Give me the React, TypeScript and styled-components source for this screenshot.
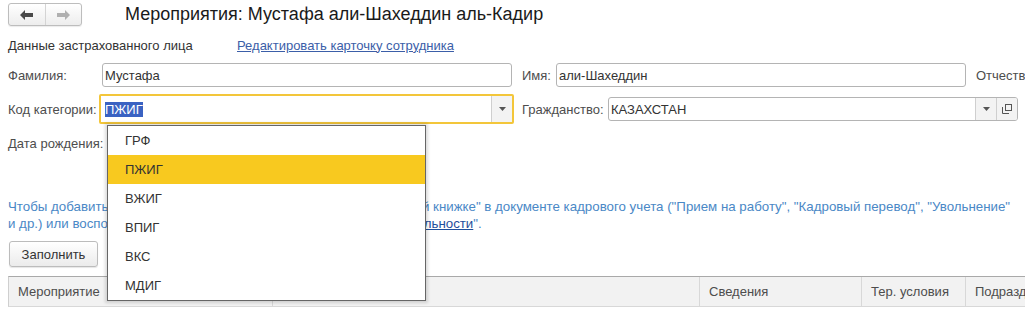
import React from 'react';
import styled, { createGlobalStyle } from 'styled-components';

const Global = createGlobalStyle`
  html, body { margin: 0; padding: 0; background: #fff; }
  body {
    font-family: "Liberation Sans", Arial, sans-serif;
    font-size: 13px;
    color: #4d4d4d;
  }
  * { box-sizing: border-box; }
`;

const Page = styled.div`
  position: relative;
  width: 1025px;
  height: 309px;
  overflow: hidden;
  display: flex;
  flex-direction: column;
`;

const Header = styled.div`
  display: flex;
  align-items: flex-start;
  height: 34px;
  padding: 3px 0 0 8px;
`;

const NavGroup = styled.div`
  display: flex;
  width: 74px;
  height: 23px;
  border: 1px solid #bdbdbd;
  border-radius: 3px;
  background: linear-gradient(#ffffff, #ededed);
  box-shadow: 0 1px 1px rgba(0, 0, 0, 0.08);
`;

const NavButton = styled.div`
  flex: 1;
  display: flex;
  align-items: center;
  justify-content: center;
  & + & {
    border-left: 1px solid #d4d4d4;
  }
`;

const Title = styled.h1`
  margin: 0 0 0 43px;
  font-size: 18px;
  font-weight: normal;
  line-height: 22px;
  color: #1a1a1a;
  white-space: nowrap;
`;

const SectionRow = styled.div`
  display: flex;
  align-items: center;
  height: 22px;
  padding-left: 8px;
`;

const SectionLabel = styled.span`
  width: 229px;
  color: #333;
`;

const Link = styled.a`
  color: #3b5ea8;
  text-decoration: underline;
  cursor: pointer;
`;

const FieldRow = styled.div<{ $h: number }>`
  display: flex;
  align-items: center;
  height: ${(p) => p.$h}px;
  margin-top: 7px;
  padding-left: 8px;
  white-space: nowrap;
`;

const Label = styled.span<{ $w: number; $ml?: number }>`
  flex-shrink: 0;
  width: ${(p) => p.$w}px;
  margin-left: ${(p) => p.$ml ?? 0}px;
  color: #4d4d4d;
`;

const Input = styled.div<{ $w: number }>`
  flex-shrink: 0;
  display: flex;
  align-items: stretch;
  width: ${(p) => p.$w}px;
  height: 24px;
  border: 1px solid #b4b4b4;
  border-radius: 3px;
  background: #fff;
  overflow: hidden;
`;

const FocusInput = styled.div<{ $w: number }>`
  flex-shrink: 0;
  display: flex;
  align-items: stretch;
  width: ${(p) => p.$w}px;
  height: 30px;
  border: 2px solid #f3c63a;
  border-radius: 2px;
  background: #fff;
`;

const Value = styled.div<{ $pl?: number }>`
  flex: 1;
  display: flex;
  align-items: center;
  padding-left: ${(p) => p.$pl ?? 2}px;
  color: #333;
`;

const Selected = styled.span`
  background: #3a62c2;
  color: #fff;
  line-height: 15px;
`;

const FieldButton = styled.div`
  flex-shrink: 0;
  width: 21px;
  display: flex;
  align-items: center;
  justify-content: center;
  border-left: 1px solid #cfcfcf;
  background: #f3f3f3;
`;

const InfoText = styled.div`
  margin-top: 43px;
  padding-left: 8px;
  font-size: 13.3px;
  line-height: 17px;
  color: #4a88c6;
  white-space: nowrap;
`;

const InfoLink = styled.a`
  color: #1f4f9c;
  text-decoration: underline;
`;

const FillButton = styled.button`
  align-self: flex-start;
  margin: 9px 0 0 9px;
  width: 89px;
  height: 26px;
  border: 1px solid #bcbcbc;
  border-radius: 3px;
  background: linear-gradient(#ffffff, #ebebeb);
  box-shadow: 0 1px 1px rgba(0, 0, 0, 0.1);
  font-family: inherit;
  font-size: 13px;
  color: #333;
  padding: 0;
`;

const Table = styled.div`
  display: flex;
  margin: 9px 0 0 8px;
  height: 31px;
  border-top: 1px solid #a9a9a9;
  border-left: 1px solid #cfcfcf;
  border-bottom: 1px solid #d8d8d8;
  background: #f2f2f2;
`;

const Col = styled.div<{ $w: number }>`
  flex-shrink: 0;
  width: ${(p) => p.$w}px;
  display: flex;
  align-items: center;
  padding-left: 9px;
  color: #4d4d4d;
  white-space: nowrap;
  & + & {
    border-left: 1px solid #d8d8d8;
  }
`;

const List = styled.div`
  position: absolute;
  left: 107px;
  top: 125px;
  width: 319px;
  background: #fff;
  border: 1px solid #666;
  box-shadow: 0 0 3px 2px rgba(0, 0, 0, 0.14);
`;

const Item = styled.div<{ $active?: boolean }>`
  height: 29px;
  display: flex;
  align-items: center;
  padding-left: 17px;
  color: #333;
  background: ${(p) => (p.$active ? '#f8c91f' : '#fff')};
`;

const Arrow = ({ dir, color }: { dir: 'left' | 'right'; color: string }) => (
  <svg width="13" height="10" viewBox="0 0 13 10" style={{ transform: dir === 'right' ? 'scaleX(-1)' : undefined }}>
    <path d="M0 5 L5 0 V3 H13 V7 H5 V10 Z" fill={color} />
  </svg>
);

const Caret = () => (
  <svg width="7" height="4" viewBox="0 0 7 4">
    <path d="M0 0 H7 L3.5 4 Z" fill="#555" />
  </svg>
);

const OpenIcon = () => (
  <svg width="12" height="12" viewBox="0 0 12 12">
    <rect x="4.5" y="1.5" width="6" height="6" fill="none" stroke="#555" />
    <path d="M1.5 4 V10.5 H8" fill="none" stroke="#555" />
  </svg>
);

const items = ['ГРФ', 'ПЖИГ', 'ВЖИГ', 'ВПИГ', 'ВКС', 'МДИГ'];

export default function App() {
  return (
    <Page>
      <Global />
      <Header>
        <NavGroup>
          <NavButton>
            <Arrow dir="left" color="#4a4a4a" />
          </NavButton>
          <NavButton>
            <Arrow dir="right" color="#b0b0b0" />
          </NavButton>
        </NavGroup>
        <Title>Мероприятия: Мустафа али-Шахеддин аль-Кадир</Title>
      </Header>

      <SectionRow>
        <SectionLabel>Данные застрахованного лица</SectionLabel>
        <Link>Редактировать карточку сотрудника</Link>
      </SectionRow>

      <FieldRow $h={24}>
        <Label $w={94}>Фамилия:</Label>
        <Input $w={410}>
          <Value>Мустафа</Value>
        </Input>
        <Label $w={34} $ml={10}>Имя:</Label>
        <Input $w={410}>
          <Value>али-Шахеддин</Value>
        </Input>
        <Label $w={60} $ml={10}>Отчество:</Label>
      </FieldRow>

      <FieldRow $h={30}>
        <Label $w={91}>Код категории:</Label>
        <FocusInput $w={415}>
          <Value $pl={4}>
            <Selected>ПЖИГ</Selected>
          </Value>
          <FieldButton>
            <Caret />
          </FieldButton>
        </FocusInput>
        <Label $w={86} $ml={8}>Гражданство:</Label>
        <Input $w={410}>
          <Value>КАЗАХСТАН</Value>
          <FieldButton>
            <Caret />
          </FieldButton>
          <FieldButton>
            <OpenIcon />
          </FieldButton>
        </Input>
      </FieldRow>

      <FieldRow $h={24}>
        <Label $w={94}>Дата рождения:</Label>
      </FieldRow>

      <InfoText>
        <div>
          Чтобы добавить событие, установите флажок "Отразить в трудовой книжке" в документе кадрового учета ("Прием на работу", "Кадровый перевод", "Увольнение"
        </div>
        <div>
          и др.) или воспользуйтесь обработкой "<InfoLink>Сведения о трудовой деятельности</InfoLink>".
        </div>
      </InfoText>

      <FillButton>Заполнить</FillButton>

      <Table>
        <Col $w={263}>Мероприятие</Col>
        <Col $w={427}>Дата</Col>
        <Col $w={162}>Сведения</Col>
        <Col $w={104}>Тер. условия</Col>
        <Col $w={120}>Подразделение</Col>
      </Table>

      <List>
        {items.map((it) => (
          <Item key={it} $active={it === 'ПЖИГ'}>
            {it}
          </Item>
        ))}
      </List>
    </Page>
  );
}
